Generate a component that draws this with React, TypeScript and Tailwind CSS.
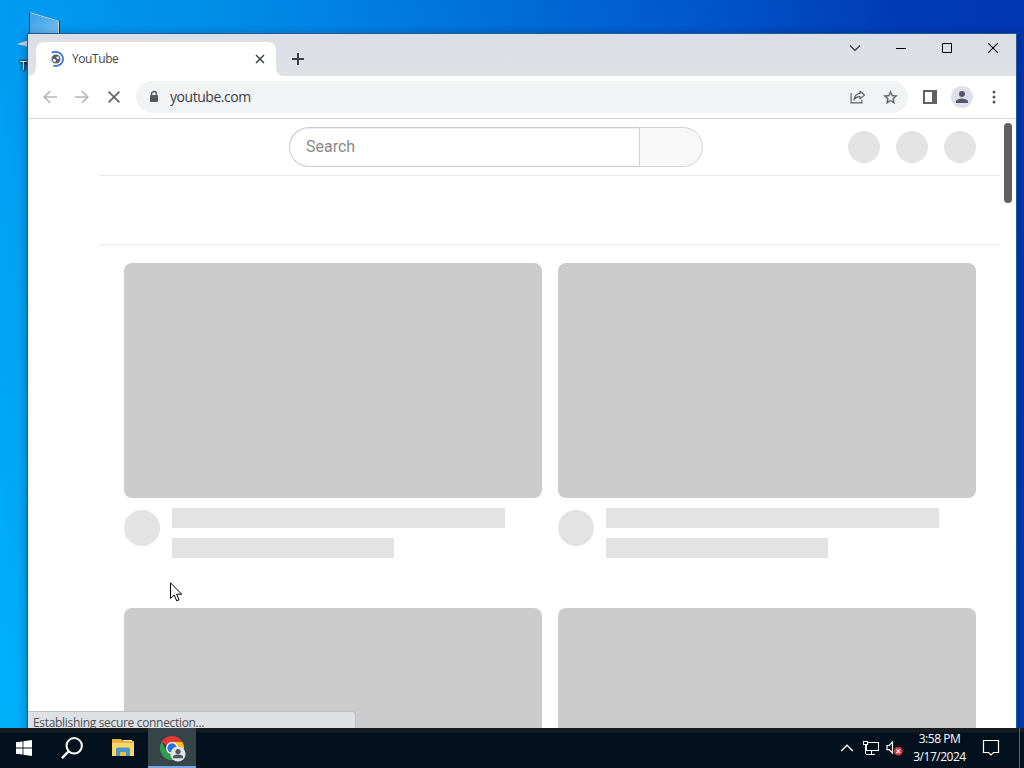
import type { ReactNode } from "react";

function IconBox({ children }: { children: ReactNode }) {
  return (
    <div className="flex h-8 w-8 shrink-0 items-center justify-center">
      {children}
    </div>
  );
}

function DesktopShortcut() {
  return (
    <div className="absolute left-[17px] top-[10px] w-12">
      <svg width="48" height="40" viewBox="0 0 48 40">
        <defs>
          <linearGradient id="pc" x1="0" y1="0" x2="1" y2="1">
            <stop offset="0" stopColor="#3ba0e6" />
            <stop offset="1" stopColor="#7cc4f2" />
          </linearGradient>
        </defs>
        <path d="M12.5 2.5 42.5 11.5V34H12.5Z" fill="url(#pc)" stroke="#123f63" />
        <path d="M13 2.600 42 11.300" stroke="#bfe3f8" fill="none" />
        <path d="M41.5 12V24" stroke="#d8d0b0" fill="none" />
        <path d="M0 34 12 30V37Z" fill="#d3d6d8" />
      </svg>
      <div className="mt-[8px] whitespace-nowrap pl-[3px] text-[12px] leading-[15px] text-white [text-shadow:1px_1px_2px_#000,0_0_2px_#000,0_0_3px_#000]">
        This PC
      </div>
    </div>
  );
}

function TabStrip() {
  return (
    <div className="flex h-[42px] bg-linear-to-b from-[#dcdee7] to-[#dfe1e5] pl-2">
      <div className="relative mt-2 flex h-[34px] w-60 items-center rounded-t-lg bg-white pl-[14px] pr-[10px]">
        <svg className="absolute -left-2 bottom-0" width="8" height="8" viewBox="0 0 8 8">
          <path d="M8 0V8H0A8 8 0 0 0 8 0Z" fill="#fff" />
        </svg>
        <svg className="absolute -right-2 bottom-0" width="8" height="8" viewBox="0 0 8 8">
          <path d="M0 0V8H8A8 8 0 0 1 0 0Z" fill="#fff" />
        </svg>
        <svg width="16" height="16" viewBox="0 0 16 16" fill="none">
          <path d="M1.800 1.600C7.500-.8 13 3 13 8s-5.500 8.300-9.800 6.500" stroke="#3f76d3" strokeWidth="1.800" />
          <circle cx="6" cy="8" r="4.500" fill="#5b6167" />
          <path d="M2.800 8.200c1.200-.6 2.600-.2 3 .9.3.8-.2 1.200-.4 2.100-1.600-.2-2.700-1.400-2.600-3Z" fill="#fff" />
          <path d="M6 6.200c1-.8 2-.9 2.800-.4l.6 1.600-1.800.8Z" fill="#e8eaed" />
        </svg>
        <span className="ml-[6px] flex-1 text-[12px] leading-4 tracking-[-0.42px] text-[#45474a]">YouTube</span>
        <svg width="12" height="12" viewBox="0 0 12 12">
          <path d="m2 2 8 8M10 2 2 10" stroke="#3c4043" strokeWidth="1.5" />
        </svg>
      </div>
      <div className="ml-[14px] mt-[9px] flex h-8 w-4 items-center justify-center">
        <svg width="14" height="14" viewBox="0 0 14 14">
          <path d="M7 1v12M1 7h12" stroke="#3c4043" strokeWidth="2" />
        </svg>
      </div>
      <div className="ml-auto flex h-7">
        <div className="flex w-[46px] items-center justify-center">
          <svg width="12" height="12" viewBox="0 0 12 12" fill="none">
            <path d="m1 3.500 5 5 5-5" stroke="#303136" strokeWidth="1.100" />
          </svg>
        </div>
        <div className="flex w-[46px] items-center justify-center">
          <svg width="10" height="10" viewBox="0 0 10 10" shapeRendering="crispEdges">
            <path d="M0 5h10v1H0z" fill="#000" />
          </svg>
        </div>
        <div className="flex w-[46px] items-center justify-center">
          <svg width="10" height="10" viewBox="0 0 10 10" fill="none">
            <path d="M.5.5h9v9h-9z" stroke="#000" />
          </svg>
        </div>
        <div className="flex w-[46px] items-center justify-center">
          <svg width="10" height="10" viewBox="0 0 10 10" fill="none">
            <path d="m0 0 10 10M10 0 0 10" stroke="#000" strokeWidth="1.100" />
          </svg>
        </div>
      </div>
    </div>
  );
}

function Toolbar() {
  return (
    <div className="flex h-[43px] items-center border-b border-[#d5d7da] bg-white px-[6px]">
      <IconBox>
        <svg width="14" height="14" viewBox="0 0 14 14" fill="none" stroke="#b4b6b9" strokeWidth="1.700">
          <path d="M14 7H1.500M7.200 1 1.200 7l6 6" />
        </svg>
      </IconBox>
      <IconBox>
        <svg width="14" height="14" viewBox="0 0 14 14" fill="none" stroke="#b4b6b9" strokeWidth="1.700">
          <path d="M0 7h12.500M6.800 1l6 6-6 6" />
        </svg>
      </IconBox>
      <IconBox>
        <svg width="12" height="12" viewBox="0 0 12 12" fill="none" stroke="#5f6368" strokeWidth="1.700">
          <path d="m.6.6 10.800 10.800M11.400.6.6 11.400" />
        </svg>
      </IconBox>
      <div className="ml-[6px] mr-[6px] flex h-8 flex-1 items-center rounded-full bg-[#f2f3f5] pl-[13px]">
        <svg width="10" height="14" viewBox="0 0 10 14">
          <path d="M2.600 6V3.900a2.400 2.400 0 0 1 4.800 0V6" fill="none" stroke="#54585c" strokeWidth="1.300" />
          <rect x="1" y="5" width="8" height="7" rx="1" fill="#54585c" />
        </svg>
        <span className="ml-[11px] flex-1 text-[14px] leading-5 tracking-[-0.45px] text-[#3a3c40]">youtube.com</span>
        <IconBox>
          <svg width="16" height="16" viewBox="0 0 16 16" fill="none" stroke="#5f6368" strokeWidth="1.200">
            <path d="M1.100 4v9.900h10.800V11" />
            <path d="M10 2.200 14.400 6 10 9.900V7.700C7.200 7.600 5.400 8.600 4 10.800 4.400 7.300 6.500 4.800 10 4.400Z" strokeLinejoin="round" />
          </svg>
        </IconBox>
        <div className="mr-0.5">
          <IconBox>
            <svg width="17" height="17" viewBox="0 0 24 24" fill="#5f6368">
              <path d="m22 9.240-7.190-.62L12 2 9.190 8.630 2 9.240l5.460 4.730L5.820 21 12 17.270 18.180 21l-1.630-7.030L22 9.240ZM12 15.400l-3.760 2.270 1-4.280-3.320-2.880 4.380-.38L12 6.100l1.710 4.040 4.380.38-3.320 2.880 1 4.280L12 15.400Z" stroke="#5f6368" strokeWidth=".4" />
            </svg>
          </IconBox>
        </div>
      </div>
      <IconBox>
        <svg width="14" height="14" viewBox="0 0 14 14">
          <path d="M0 0h14v14H0zM2 2v10h7V2z" fill="#5f6063" fillRule="evenodd" />
        </svg>
      </IconBox>
      <IconBox>
        <div className="flex h-[22px] w-[22px] items-center justify-center rounded-full bg-[#dfe0e9]">
          <svg width="12" height="12" viewBox="0 0 12 12" fill="#55576a">
            <circle cx="6" cy="3" r="3" />
            <path d="M0 12v-1.500C0 8.500 4 7.500 6 7.500s6 1 6 3V12Z" />
          </svg>
        </div>
      </IconBox>
      <IconBox>
        <svg width="4" height="14" viewBox="0 0 4 14" fill="#55585c">
          <circle cx="2" cy="2" r="1.500" />
          <circle cx="2" cy="7" r="1.500" />
          <circle cx="2" cy="12" r="1.500" />
        </svg>
      </IconBox>
    </div>
  );
}

function VideoSkeleton() {
  return (
    <div className="h-[345px]">
      <div className="h-[235px] rounded-lg bg-[#ccc]" />
      <div className="mt-[10px] flex">
        <div className="mt-0.5 h-9 w-9 rounded-full bg-[#e3e3e3]" />
        <div className="ml-3 flex-1">
          <div className="h-5 w-[333px] bg-[#e3e3e3]" />
          <div className="mt-[10px] h-5 w-[222px] bg-[#e3e3e3]" />
        </div>
      </div>
    </div>
  );
}

function Page() {
  return (
    <div className="flex flex-1 overflow-hidden bg-white">
      <div className="ml-[72px] w-[900px]">
        <div className="flex h-[57px] items-center border-b border-[#e8e8e8]">
          <div className="ml-[189px] flex h-10 w-[414px] font-[Roboto,sans-serif]">
            <div className="flex w-[350px] items-center rounded-l-full border border-r-0 border-[#ccc] pl-4 text-[16px] text-[#888] shadow-[inset_0_1px_1px_#eee]">
              Search
            </div>
            <div className="flex-1 rounded-r-full border border-[#d3d3d3] bg-[#f8f8f8]" />
          </div>
          <div className="ml-auto mr-6 flex gap-4">
            <div className="h-8 w-8 rounded-full bg-[#e3e3e3]" />
            <div className="h-8 w-8 rounded-full bg-[#e3e3e3]" />
            <div className="h-8 w-8 rounded-full bg-[#e3e3e3]" />
          </div>
        </div>
        <div className="h-[69px] border-b border-[#e8e8e8]" />
        <div className="grid grid-cols-2 gap-x-4 px-6 pt-[18px]">
          <VideoSkeleton />
          <VideoSkeleton />
          <VideoSkeleton />
          <VideoSkeleton />
        </div>
      </div>
      <div className="ml-1 mt-1 h-20 w-2 rounded-full bg-[#606060]" />
    </div>
  );
}

function BrowserWindow() {
  return (
    <div className="absolute left-7 top-[34px] flex h-[694px] w-[988px] flex-col overflow-hidden shadow-[0_0_0_1px_#1e5c94,0_2px_8px_2px_rgba(0,0,0,0.3)]">
      <TabStrip />
      <Toolbar />
      <Page />
      <div className="absolute bottom-0 left-0 h-[17px] w-[328px] rounded-tr border-r border-t border-[#bcbec2] bg-[#dee1e4] pl-[5px] text-[12px] leading-[22px] tracking-[-0.32px] text-[#4c4f53]">
        Establishing secure connection...
      </div>
    </div>
  );
}

function Taskbar() {
  return (
    <div className="absolute bottom-0 left-0 flex h-10 w-full bg-[linear-gradient(#171d1f_0_4px,#02111d_5px)]">
      <div className="flex w-12 items-center justify-center">
        <svg width="16" height="16" viewBox="0 0 16 16" fill="#fff">
          <path d="M0 2.300 6.600 1.400v6.100H0zM7.400 1.300 16 0v7.500H7.400zM0 8.400h6.600v6.200L0 13.700zM7.400 8.400H16V16l-8.600-1.300z" />
        </svg>
      </div>
      <div className="flex w-12 items-center justify-center">
        <svg width="22" height="22" viewBox="0 0 22 22" fill="none" stroke="#fff">
          <circle cx="13.200" cy="8.800" r="7.700" strokeWidth="2" />
          <path d="M7.900 14.200.9 21.200" strokeWidth="2.400" />
        </svg>
      </div>
      <div className="flex w-[52px] items-center justify-center">
        <svg width="22" height="20" viewBox="0 0 22 20" className="ml-0.5">
          <path d="M0 1h9l2 2h11v15H0z" fill="#e5b43c" />
          <path d="M0 5h22v13H0z" fill="#fbd866" />
          <path d="M11 2h9v1h-9z" fill="#fff1b8" />
          <path d="M4 18v-7.500L5.500 9.500h11l1.500 1V18h-4v-4H8v4z" fill="#4a98c6" />
          <path d="M8 14h6v4H8z" fill="#e9bd4d" />
        </svg>
      </div>
      <div className="flex w-12 items-center justify-center border-b-2 border-[#76a9e4] bg-[#36454a]">
        <svg width="26" height="26" viewBox="0 0 26 26" className="ml-0.5 mt-1">
          <path d="M12 12 1.600 6A12 12 0 0 1 22.400 6Z" fill="#e33b2e" />
          <path d="M1.600 6A12 12 0 0 0 12 24L17.200 15H6.800Z" fill="#2f9e4f" />
          <path d="M22.400 6A12 12 0 0 1 12 24L17.200 15 12 6Z" fill="#fbc21b" />
          <circle cx="12" cy="12" r="6" fill="#fff" />
          <circle cx="12" cy="12" r="4.700" fill="#2e6fe0" />
          <circle cx="18" cy="18" r="7.600" fill="#dfe3ea" />
          <circle cx="18" cy="15.500" r="2.600" fill="#53565c" />
          <path d="M13 22.200v-1.500c0-1.400 3.200-2.200 5-2.200s5 .8 5 2.200v1.500Z" fill="#53565c" />
        </svg>
      </div>
      <div className="ml-auto flex items-center">
        <div className="flex w-6 justify-center">
          <svg width="14" height="10" viewBox="0 0 14 10" fill="none">
            <path d="m1.200 8 5.800-5.800L12.800 8" stroke="#fff" strokeWidth="1.300" />
          </svg>
        </div>
        <div className="flex w-6 justify-center">
          <svg width="18" height="16" viewBox="0 0 18 16" fill="none" stroke="#fff" shapeRendering="crispEdges">
            <path d="M6 2.500h10.500v8H4.500V5M4 14.500h9M9.500 11v3M1.500 1.500h4v3h-4zM3.500 5v9" />
          </svg>
        </div>
        <div className="flex w-6 justify-center">
          <svg width="18" height="16" viewBox="0 0 18 16" fill="none">
            <path d="M1 5.500h2.200L6.500 2v11L3.200 9.700H1Z" stroke="#fff" strokeWidth="1.200" />
            <circle cx="12.300" cy="11.200" r="4.400" fill="#c9373b" />
            <path d="m10.500 9.400 3.600 3.600M14.100 9.400l-3.600 3.600" stroke="#fff" strokeWidth="1.200" />
          </svg>
        </div>
        <div className="flex w-[65px] flex-col text-center text-[12px] leading-[18px] tracking-[-0.48px] text-white">
          <span>3:58 PM</span>
          <span>3/17/2024</span>
        </div>
        <div className="ml-[10px] flex w-[18px] justify-center">
          <svg width="18" height="18" viewBox="0 0 18 18" fill="none">
            <path d="M1.500 1.500h15v12h-5l-2.500 2.500-2.500-2.500h-5z" stroke="#fff" strokeWidth="1.200" />
          </svg>
        </div>
        <div className="ml-[19px] h-10 w-[5px] border-l border-[#59646c]" />
      </div>
    </div>
  );
}

function MouseCursor() {
  return (
    <svg className="absolute left-[170px] top-[582px]" width="13" height="20" viewBox="0 0 13 20">
      <path
        d="M.5.8V16.500L4.200 13l2.500 5.800 2.300-1L6.600 12.200h5.100Z"
        fill="#fff"
        stroke="#000"
      />
    </svg>
  );
}

export default function App() {
  return (
    <div className="relative h-[768px] w-[1024px] overflow-hidden bg-[linear-gradient(80deg,#00b2fa_0%,#009cf2_12%,#0086e6_37%,#0056cc_72%,#003cb6_88%,#0036b2_100%)] font-['Open_Sans','Noto_Sans',sans-serif]">
      <DesktopShortcut />
      <BrowserWindow />
      <Taskbar />
      <MouseCursor />
    </div>
  );
}
